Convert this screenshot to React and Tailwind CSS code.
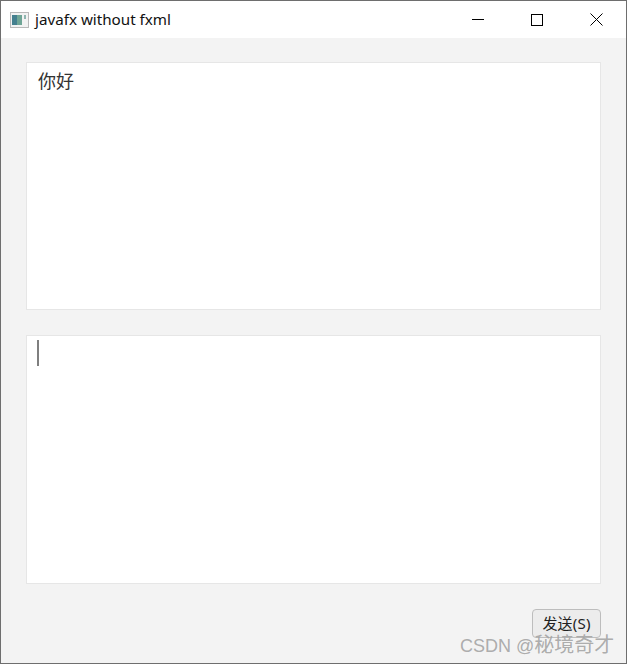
const App = () => {
	return (
		<div className="relative w-[627px] h-[664px] flex flex-col border border-[#6e6e6e] bg-[#f3f3f3] overflow-hidden" style={{ fontFamily: '"Noto Sans", "Noto Sans CJK SC", sans-serif' }}>
			{/* title bar */}
			<div className="h-[37px] shrink-0 bg-white flex items-center">
				<svg width="19" height="16" viewBox="0 0 19 16" className="ml-[9px]">
					<rect x="0.5" y="0.5" width="18" height="15" fill="#f2f2f2" stroke="#b9b9b9" />
					<rect x="2" y="3" width="10" height="10" fill="#6fa596" />
					<rect x="2" y="3" width="5" height="10" fill="#44808f" />
					<rect x="14" y="3" width="2" height="4" fill="#8fb5b0" />
				</svg>
				<span className="ml-[6px] text-[15.2px] leading-none text-[#111]">javafx without fxml</span>
				<div className="ml-auto flex items-center">
					<div className="w-[59px] h-[37px] flex items-center justify-center">
						<div className="w-[12px] h-px bg-black" />
					</div>
					<div className="w-[60px] h-[37px] flex items-center justify-center">
						<div className="w-[12px] h-[12px] border border-black" />
					</div>
					<div className="w-[59px] h-[37px] flex items-center justify-center">
						<svg width="13" height="13" viewBox="0 0 13 13">
							<path d="M0.5 0.5 L12.5 12.5 M12.5 0.5 L0.5 12.5" stroke="#000" strokeWidth="1" fill="none" />
						</svg>
					</div>
				</div>
			</div>

			{/* content */}
			<div className="flex-1 flex flex-col pt-[24px] px-[25px]">
				<div className="h-[248px] bg-white border border-[#e6e6e6] pl-[11px] pt-[5px]">
					<p className="text-[18px] leading-[26px] text-[#333]">你好</p>
				</div>
				<div className="h-[249px] mt-[25px] bg-white border border-[#e6e6e6] pl-[10px] pt-[4px]">
					<div className="w-[2px] h-[26px] bg-[#7f7f7f]" />
				</div>
				<div className="flex justify-end mt-[25px]">
					<button className="w-[69px] h-[29px] rounded-[4px] border border-[#bdbdbd] bg-[#ececec] text-[15px] leading-none text-[#222] tracking-[0.2px]">发送(S)</button>
				</div>
			</div>

			{/* watermark */}
			<span className="absolute left-[459px] top-[632px] text-[18px] leading-[24px] whitespace-nowrap text-[#a3a3a3]/90 font-['Liberation_Sans','Noto_Sans_CJK_SC',sans-serif]">CSDN @<span className="text-[20px]">秘境奇才</span></span>
		</div>
	)
}

export default App
